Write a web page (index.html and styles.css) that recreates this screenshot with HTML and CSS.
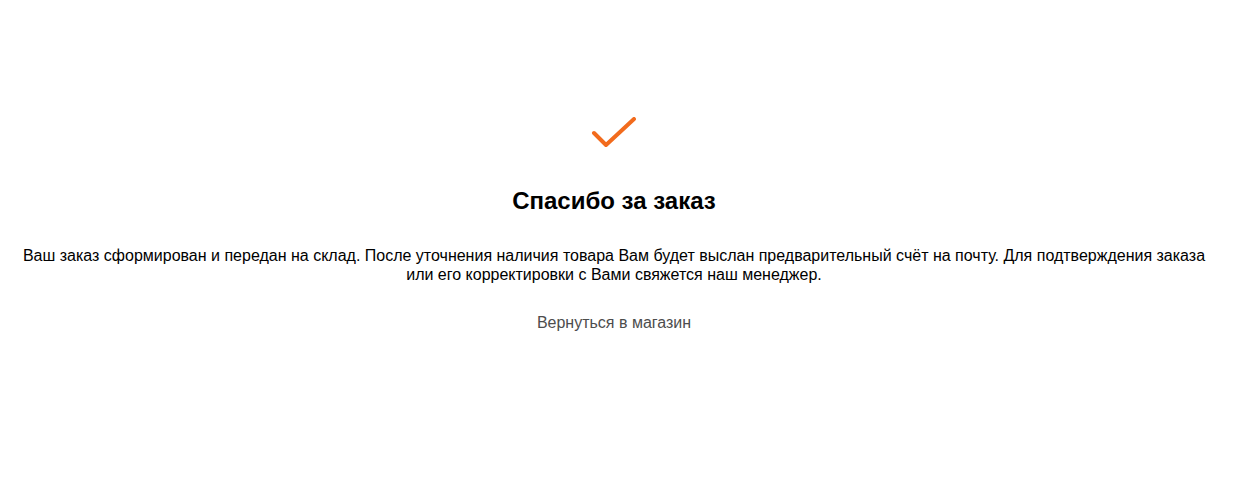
FILE: index.html
```html
<!DOCTYPE html>
<html lang="ru">
<head>
<meta charset="utf-8">
<link rel="stylesheet" href="styles.css">
</head>
<body>
<div class="page">
  <div class="thanks">
    <svg class="check" width="46" height="34" viewBox="0 0 46 34">
      <path d="M3 16 L15 28 L43 2" fill="none" stroke="#f26b1d" stroke-width="4" stroke-linecap="round" stroke-linejoin="round"/>
    </svg>
    <h1 class="title">Спасибо за заказ</h1>
    <p class="text">Ваш заказ сформирован и передан на склад. После уточнения наличия товара Вам будет выслан предварительный счёт на почту. Для подтверждения заказа или его корректировки с Вами свяжется наш менеджер.</p>
    <a class="back" href="#">Вернуться в магазин</a>
  </div>
</div>
</body>
</html>
```

FILE: styles.css
```css
html, body {
  margin: 0;
  padding: 0;
  background: #fff;
  font-family: "Liberation Sans", Arial, sans-serif;
  color: #000;
}
.page {
  width: 1228px;
  padding: 0 15px;
  box-sizing: border-box;
}
.thanks {
  display: flex;
  flex-direction: column;
  align-items: center;
  text-align: center;
  padding-top: 117px;
}
.check {
  display: block;
}
.title {
  margin: 35px 0 0;
  font-size: 24px;
  line-height: 30px;
  font-weight: bold;
}
.text {
  margin: 30px 0 0;
  font-size: 16px;
  line-height: 19px;
}
.back {
  margin-top: 29px;
  font-size: 16px;
  line-height: 19px;
  color: #4d4d4d;
  text-decoration: none;
}
```
